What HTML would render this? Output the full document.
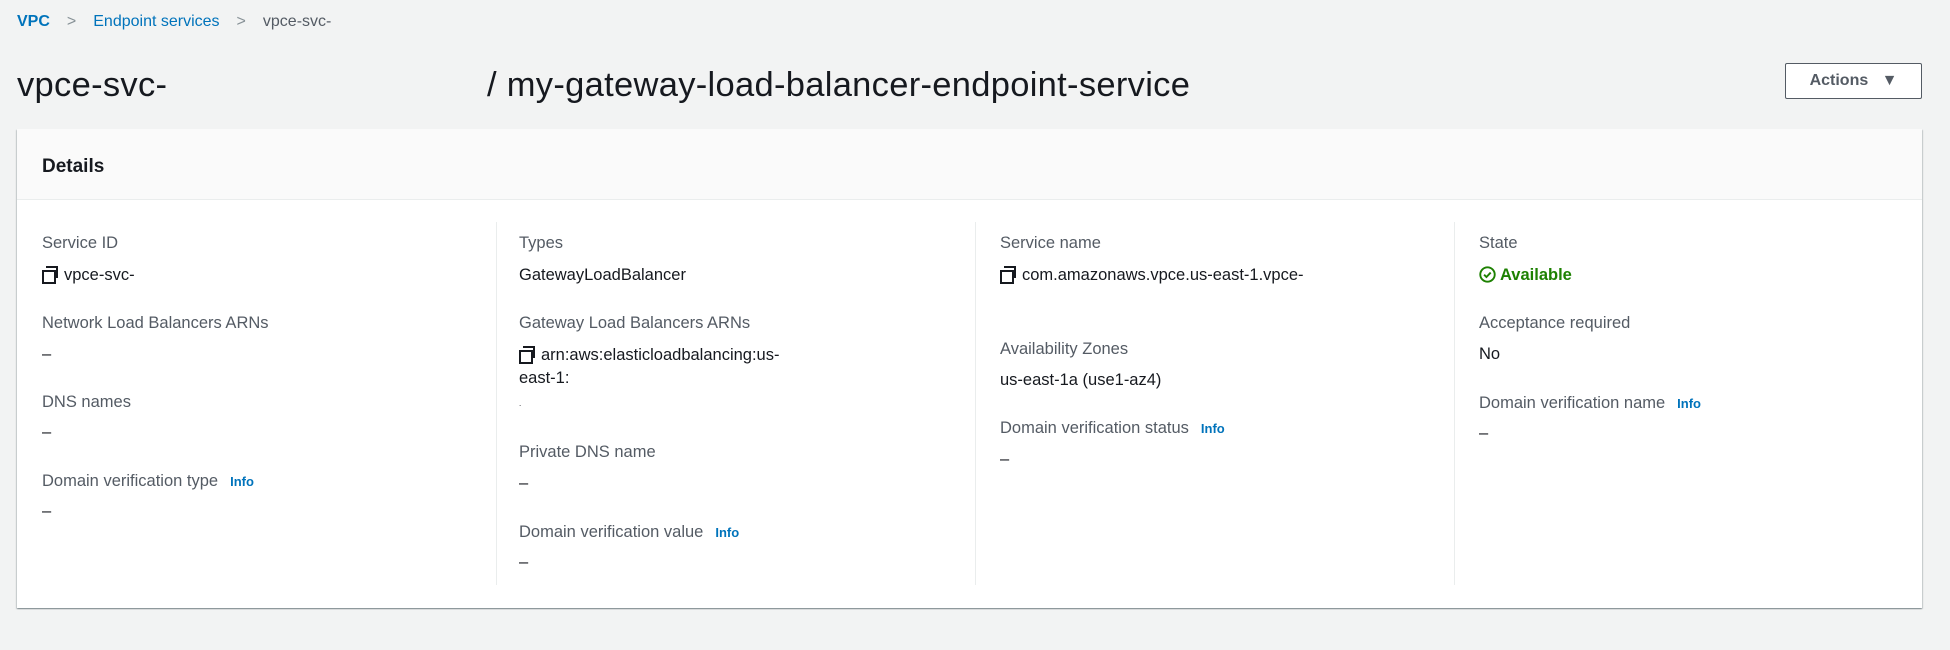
<!DOCTYPE html>
<html><head><meta charset="utf-8"><style>
*{margin:0;padding:0;box-sizing:border-box}
body{width:1950px;height:650px;background:#f2f3f3;font-family:"Liberation Sans",sans-serif;position:relative;overflow:hidden;color:#16191f}
.a{position:absolute;white-space:nowrap}
.bc{font-size:16px;top:13px}
.link{color:#0073bb}
.sep{color:#879196}
.title{font-size:34.5px;top:66px;color:#16191f;letter-spacing:0.3px}
.btn{position:absolute;left:1785px;top:63px;width:137px;height:36px;border:1px solid #545b64;background:#fff;border-radius:2px;font-weight:bold;font-size:16px;color:#545b64;text-align:center;line-height:34px}
.card{position:absolute;left:17px;top:129px;width:1905px;height:479px;background:#fff;box-shadow:0 1px 1px 0 rgba(0,28,36,.3),1px 1px 1px 0 rgba(0,28,36,.15),-1px 1px 1px 0 rgba(0,28,36,.15)}
.hdr{position:absolute;left:0;top:0;width:100%;height:71px;background:#fafafa;border-bottom:1px solid #eaeded}
.hdr span{position:absolute;left:25px;top:27px;font-size:19px;font-weight:bold}
.div{position:absolute;top:93px;width:1px;height:363px;background:#eaeded}
.l{font-size:16.5px;color:#545b64;position:absolute;white-space:nowrap;line-height:20px}
.v{font-size:16.5px;color:#16191f;position:absolute;white-space:nowrap;line-height:20px}
.info{color:#0073bb;font-weight:bold;font-size:13px;margin-left:12px}
.cp{display:inline-block;width:16px;height:16px;position:relative;vertical-align:-2px;margin-right:6px}
.cp:before{content:"";position:absolute;left:0;top:4px;width:10px;height:10px;border:2px solid #16191f}
.cp:after{content:"";position:absolute;left:4px;top:0;width:10px;height:10px;border-top:2px solid #16191f;border-right:2px solid #16191f}
.ok{color:#1d8102;font-weight:bold}
</style></head><body>
<div class="a bc" style="left:17px"><span class="link" style="font-weight:bold">VPC</span><span class="sep" style="margin:0 17px">&gt;</span><span class="link">Endpoint services</span><span class="sep" style="margin:0 17px">&gt;</span><span style="color:#545b64">vpce-svc-</span></div>
<div class="a title" style="left:17px">vpce-svc-</div>
<div class="a title" style="left:487px">/ my-gateway-load-balancer-endpoint-service</div>
<div class="btn">Actions&nbsp;&nbsp;&nbsp;▼</div>
<div class="card">
<div class="hdr"><span>Details</span></div>
<div class="div" style="left:479px"></div>
<div class="div" style="left:958px"></div>
<div class="div" style="left:1437px"></div>

<div class="l" style="left:25px;top:104px">Service ID</div>
<div class="v" style="left:25px;top:136px"><span class="cp"></span>vpce-svc-</div>
<div class="l" style="left:25px;top:184px">Network Load Balancers ARNs</div>
<div class="v" style="left:25px;top:215px">–</div>
<div class="l" style="left:25px;top:263px">DNS names</div>
<div class="v" style="left:25px;top:293px">–</div>
<div class="l" style="left:25px;top:342px">Domain verification type<span class="info">Info</span></div>
<div class="v" style="left:25px;top:372px">–</div>

<div class="l" style="left:502px;top:104px">Types</div>
<div class="v" style="left:502px;top:136px">GatewayLoadBalancer</div>
<div class="l" style="left:502px;top:184px">Gateway Load Balancers ARNs</div>
<div class="v" style="left:502px;top:216px"><span class="cp"></span>arn:aws:elasticloadbalancing:us-</div>
<div class="v" style="left:502px;top:239px">east-1:</div>
<div class="v" style="left:502px;top:265px;font-size:8px">.</div>
<div class="l" style="left:502px;top:313px">Private DNS name</div>
<div class="v" style="left:502px;top:344px">–</div>
<div class="l" style="left:502px;top:393px">Domain verification value<span class="info">Info</span></div>
<div class="v" style="left:502px;top:423px">–</div>

<div class="l" style="left:983px;top:104px">Service name</div>
<div class="v" style="left:983px;top:136px"><span class="cp"></span>com.amazonaws.vpce.us-east-1.vpce-</div>
<div class="l" style="left:983px;top:210px">Availability Zones</div>
<div class="v" style="left:983px;top:241px">us-east-1a (use1-az4)</div>
<div class="l" style="left:983px;top:289px">Domain verification status<span class="info">Info</span></div>
<div class="v" style="left:983px;top:320px">–</div>

<div class="l" style="left:1462px;top:104px">State</div>
<div class="v ok" style="left:1462px;top:136px"><svg width="17" height="17" viewBox="0 0 16 16" style="vertical-align:-3px;margin-right:4px"><circle cx="8" cy="8" r="6.8" fill="none" stroke="#1d8102" stroke-width="1.8"/><path d="M4.8 8.2l2.2 2.2 4-4.2" fill="none" stroke="#1d8102" stroke-width="1.8"/></svg>Available</div>
<div class="l" style="left:1462px;top:184px">Acceptance required</div>
<div class="v" style="left:1462px;top:215px">No</div>
<div class="l" style="left:1462px;top:264px">Domain verification name<span class="info">Info</span></div>
<div class="v" style="left:1462px;top:294px">–</div>
</div>
</body></html>
